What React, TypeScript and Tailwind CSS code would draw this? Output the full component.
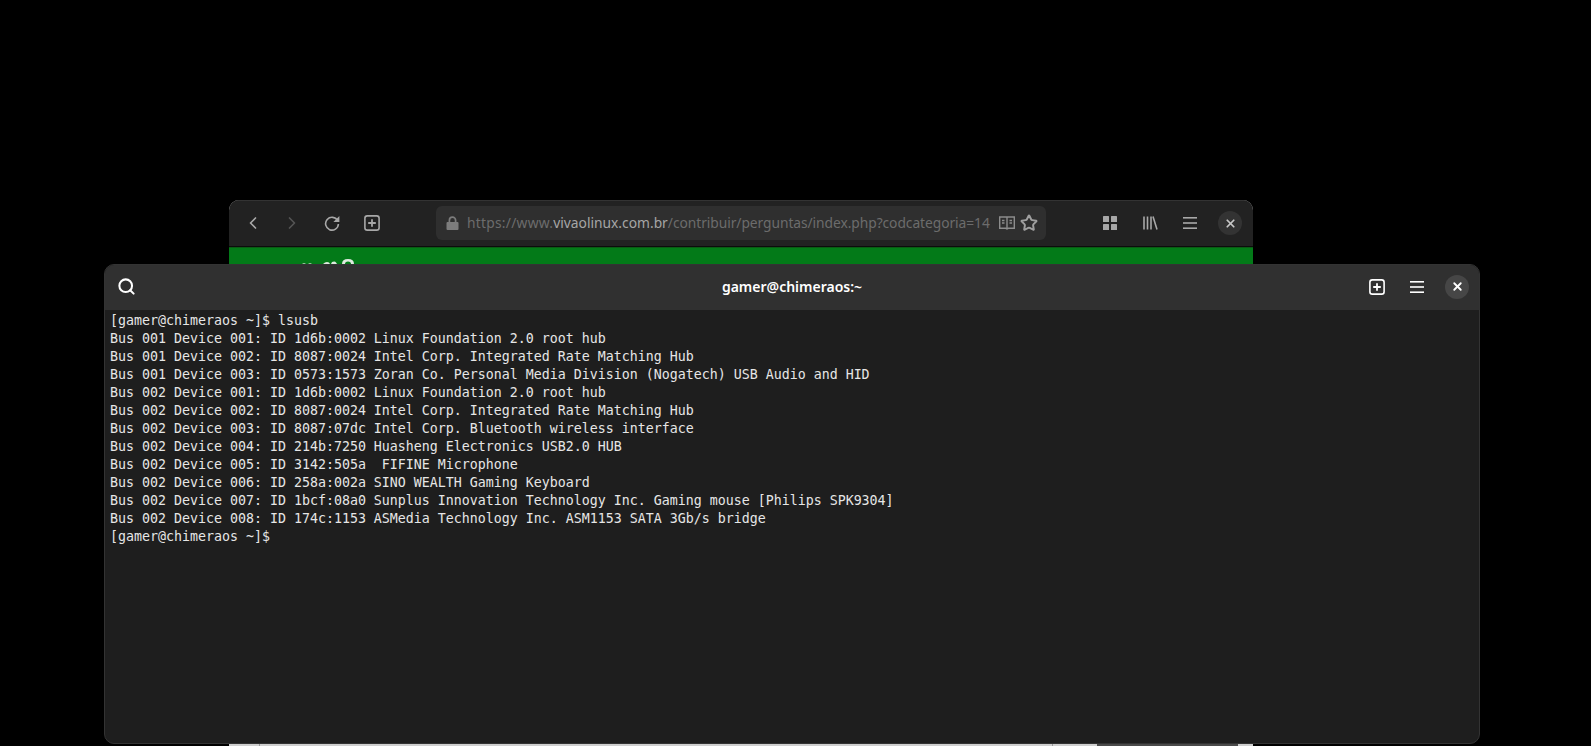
import { Search, ChevronLeft, ChevronRight, Star, X } from 'lucide-react'

const LINES = [
  '[gamer@chimeraos ~]$ lsusb',
  'Bus 001 Device 001: ID 1d6b:0002 Linux Foundation 2.0 root hub',
  'Bus 001 Device 002: ID 8087:0024 Intel Corp. Integrated Rate Matching Hub',
  'Bus 001 Device 003: ID 0573:1573 Zoran Co. Personal Media Division (Nogatech) USB Audio and HID',
  'Bus 002 Device 001: ID 1d6b:0002 Linux Foundation 2.0 root hub',
  'Bus 002 Device 002: ID 8087:0024 Intel Corp. Integrated Rate Matching Hub',
  'Bus 002 Device 003: ID 8087:07dc Intel Corp. Bluetooth wireless interface',
  'Bus 002 Device 004: ID 214b:7250 Huasheng Electronics USB2.0 HUB',
  'Bus 002 Device 005: ID 3142:505a  FIFINE Microphone',
  'Bus 002 Device 006: ID 258a:002a SINO WEALTH Gaming Keyboard',
  'Bus 002 Device 007: ID 1bcf:08a0 Sunplus Innovation Technology Inc. Gaming mouse [Philips SPK9304]',
  'Bus 002 Device 008: ID 174c:1153 ASMedia Technology Inc. ASM1153 SATA 3Gb/s bridge',
  '[gamer@chimeraos ~]$',
]

function NewTabIcon({ className }: { className: string }) {
  return (
    <svg viewBox="0 0 16 16" className={className} fill="none" stroke="currentColor" strokeWidth="1.6">
      <rect x="0.9" y="0.9" width="14.2" height="14.2" rx="2.4" />
      <path d="M8 4.2v7.6M4.2 8h7.6" strokeWidth="1.8" />
    </svg>
  )
}

function MenuIcon({ className }: { className: string }) {
  return (
    <svg viewBox="0 0 14 12" className={className} fill="currentColor">
      <rect x="0" y="0" width="14" height="1.6" />
      <rect x="0" y="5.2" width="14" height="1.6" />
      <rect x="0" y="10.4" width="14" height="1.6" />
    </svg>
  )
}

function BrowserWindow() {
  return (
    <div className="absolute left-[229px] top-[200px] w-[1024px] h-[546px] flex flex-col rounded-t-[10px] overflow-hidden bg-[#cfcfcf]">
      <div className="h-[47px] pb-[1px] flex items-center bg-[#222222] border-t border-[#333333] border-b-[#0c0c0c] border-b shrink-0 text-[#a8a8a8]">
        <div className="w-[207px] flex items-center shrink-0">
          <ChevronLeft size={20} strokeWidth={2} className="ml-[14px] text-[#a8a8a8]" />
          <ChevronRight size={20} strokeWidth={2} className="ml-[19px] text-[#555555]" />
          {/* reload */}
          <svg viewBox="0 0 16 16" className="w-4 h-4 ml-[22px]" fill="none" stroke="currentColor" strokeWidth="1.6">
            <path d="M13.6 5.6A6.4 6.4 0 1 0 14.4 9" />
            <path d="M15.4 1v6h-6z" fill="currentColor" stroke="none" />
          </svg>
          <NewTabIcon className="w-4 h-4 ml-[24px]" />
        </div>
        <div className="w-[610px] h-[34px] flex items-center rounded-[6px] bg-[#2f2f2f] shrink-0 text-[13.8px] font-['Noto_Sans',sans-serif] whitespace-nowrap">
          <svg viewBox="0 0 13 14" className="w-[13px] h-[14px] ml-[10px] text-[#7c7c7c] shrink-0" fill="none" stroke="currentColor">
            <path d="M3.4 6.5V4.2a3.1 3.1 0 0 1 6.2 0v2.3" strokeWidth="1.7" />
            <rect x="0.5" y="6" width="12" height="8" rx="1" fill="currentColor" stroke="none" />
          </svg>
          <span className="ml-[8px] text-[#6c6c6c]">
            <span className="tracking-[0.25px]">https://www.</span>
            <span className="text-[#a6a6a6]">vivaolinux.com.br</span>
            <span className="tracking-[-0.06px]">/contribuir/perguntas/index.php?codcategoria=14</span>
          </span>
          <div className="flex items-center ml-auto mr-[8px]">
            <svg viewBox="0 0 16 14" className="w-4 h-[14px] shrink-0 text-[#8c8c8c]" fill="none" stroke="currentColor" strokeWidth="1.4">
              <path d="M.7 1h14.6v11.3H9.2L8 13l-1.2-.7H.7zM8 1v11M3 4.5h2.5M3 7h2.5M10.5 4.5H13M10.5 7H13" />
            </svg>
            <Star size={18} strokeWidth={2.6} className="ml-[5px] text-[#a0a0a0] shrink-0" />
          </div>
        </div>
        <div className="flex items-center ml-auto">
          <svg viewBox="0 0 14 14" className="w-[14px] h-[14px] text-[#a8a8a8]" fill="currentColor">
            <rect width="6" height="6" rx="0.6" />
            <rect x="8" width="6" height="6" rx="0.6" />
            <rect y="8" width="6" height="6" rx="0.6" />
            <rect x="8" y="8" width="6" height="6" rx="0.6" />
          </svg>
          <svg viewBox="0 0 15 14" className="w-[15px] h-[14px] ml-[26px]" fill="none" stroke="currentColor" strokeWidth="1.6">
            <path d="M1 0.5v13M4.5 0.5v13M8 0.5v13M10 0.5l4 13" />
          </svg>
          <MenuIcon className="w-[14px] h-3 ml-[25px]" />
          <div className="w-6 h-6 ml-[21px] mr-[11px] rounded-full bg-[#333333] flex items-center justify-center text-[#c8c8c8]">
            <X size={13} strokeWidth={3.2} />
          </div>
        </div>
      </div>
      <div className="h-[17px] bg-[#037a18] border-t border-[#0a5c14] shrink-0 relative overflow-hidden">
        {/* top of the site logo, the terminal hides the rest */}
        <svg viewBox="0 0 60 6" className="absolute left-[68px] bottom-0 w-[60px] h-[6px]" fill="#dfe9df">
          <path d="M5 6q2-1.5 4 0zM11 6q2-1.5 4 0zM26 6q3-3 6-1.5l1 1.5zM34 6l1-2q3-1 4 .5l1 1.5zM45 6q0-5 6-5t6 5h-3q0-2.5-3-2.5T48 6z" />
        </svg>
      </div>
      <div className="flex-1 flex flex-col justify-end">
        <div className="h-[2px] flex">
          <div className="w-[30px] bg-[#cfcfcf]" />
          <div className="w-[793px] bg-[#cfcfcf] border-l border-[#999999]" />
          <div className="w-[45px] bg-[#cfcfcf] border-l border-[#999999]" />
          <div className="w-[141px] bg-[#4a4a4a]" />
          <div className="w-[15px] bg-[#cfcfcf]" />
        </div>
      </div>
    </div>
  )
}

function TerminalWindow() {
  return (
    <div className="absolute left-[104px] top-[264px] w-[1376px] h-[480px] flex flex-col rounded-[10px] overflow-hidden bg-[#1e1e1e] border border-[#333333]">
      <div className="h-[45px] pb-[2px] flex items-center bg-[#303030] shrink-0 relative text-white">
        <Search size={19} strokeWidth={2.6} className="ml-[12px]" />
        <span className="absolute left-0 right-0 top-[11px] text-center text-[14px] font-semibold font-['Noto_Sans',sans-serif]">gamer@chimeraos:~</span>
        <div className="flex items-center ml-auto">
          <NewTabIcon className="w-4 h-4" />
          <MenuIcon className="w-[14px] h-3 ml-[25px]" />
          <div className="w-6 h-6 ml-[21px] mr-[10px] rounded-full bg-[#464646] flex items-center justify-center">
            <X size={13} strokeWidth={3.4} />
          </div>
        </div>
      </div>
      <pre className="flex-1 pl-[5px] pt-[2px] text-[13.29px] leading-[18px] text-[#e6e6e6] font-['DejaVu_Sans_Mono',monospace]">
        {LINES.join('\n')}
      </pre>
    </div>
  )
}

export default function App() {
  return (
    <div className="relative w-[1591px] h-[746px] bg-black overflow-hidden">
      <BrowserWindow />
      <TerminalWindow />
    </div>
  )
}
